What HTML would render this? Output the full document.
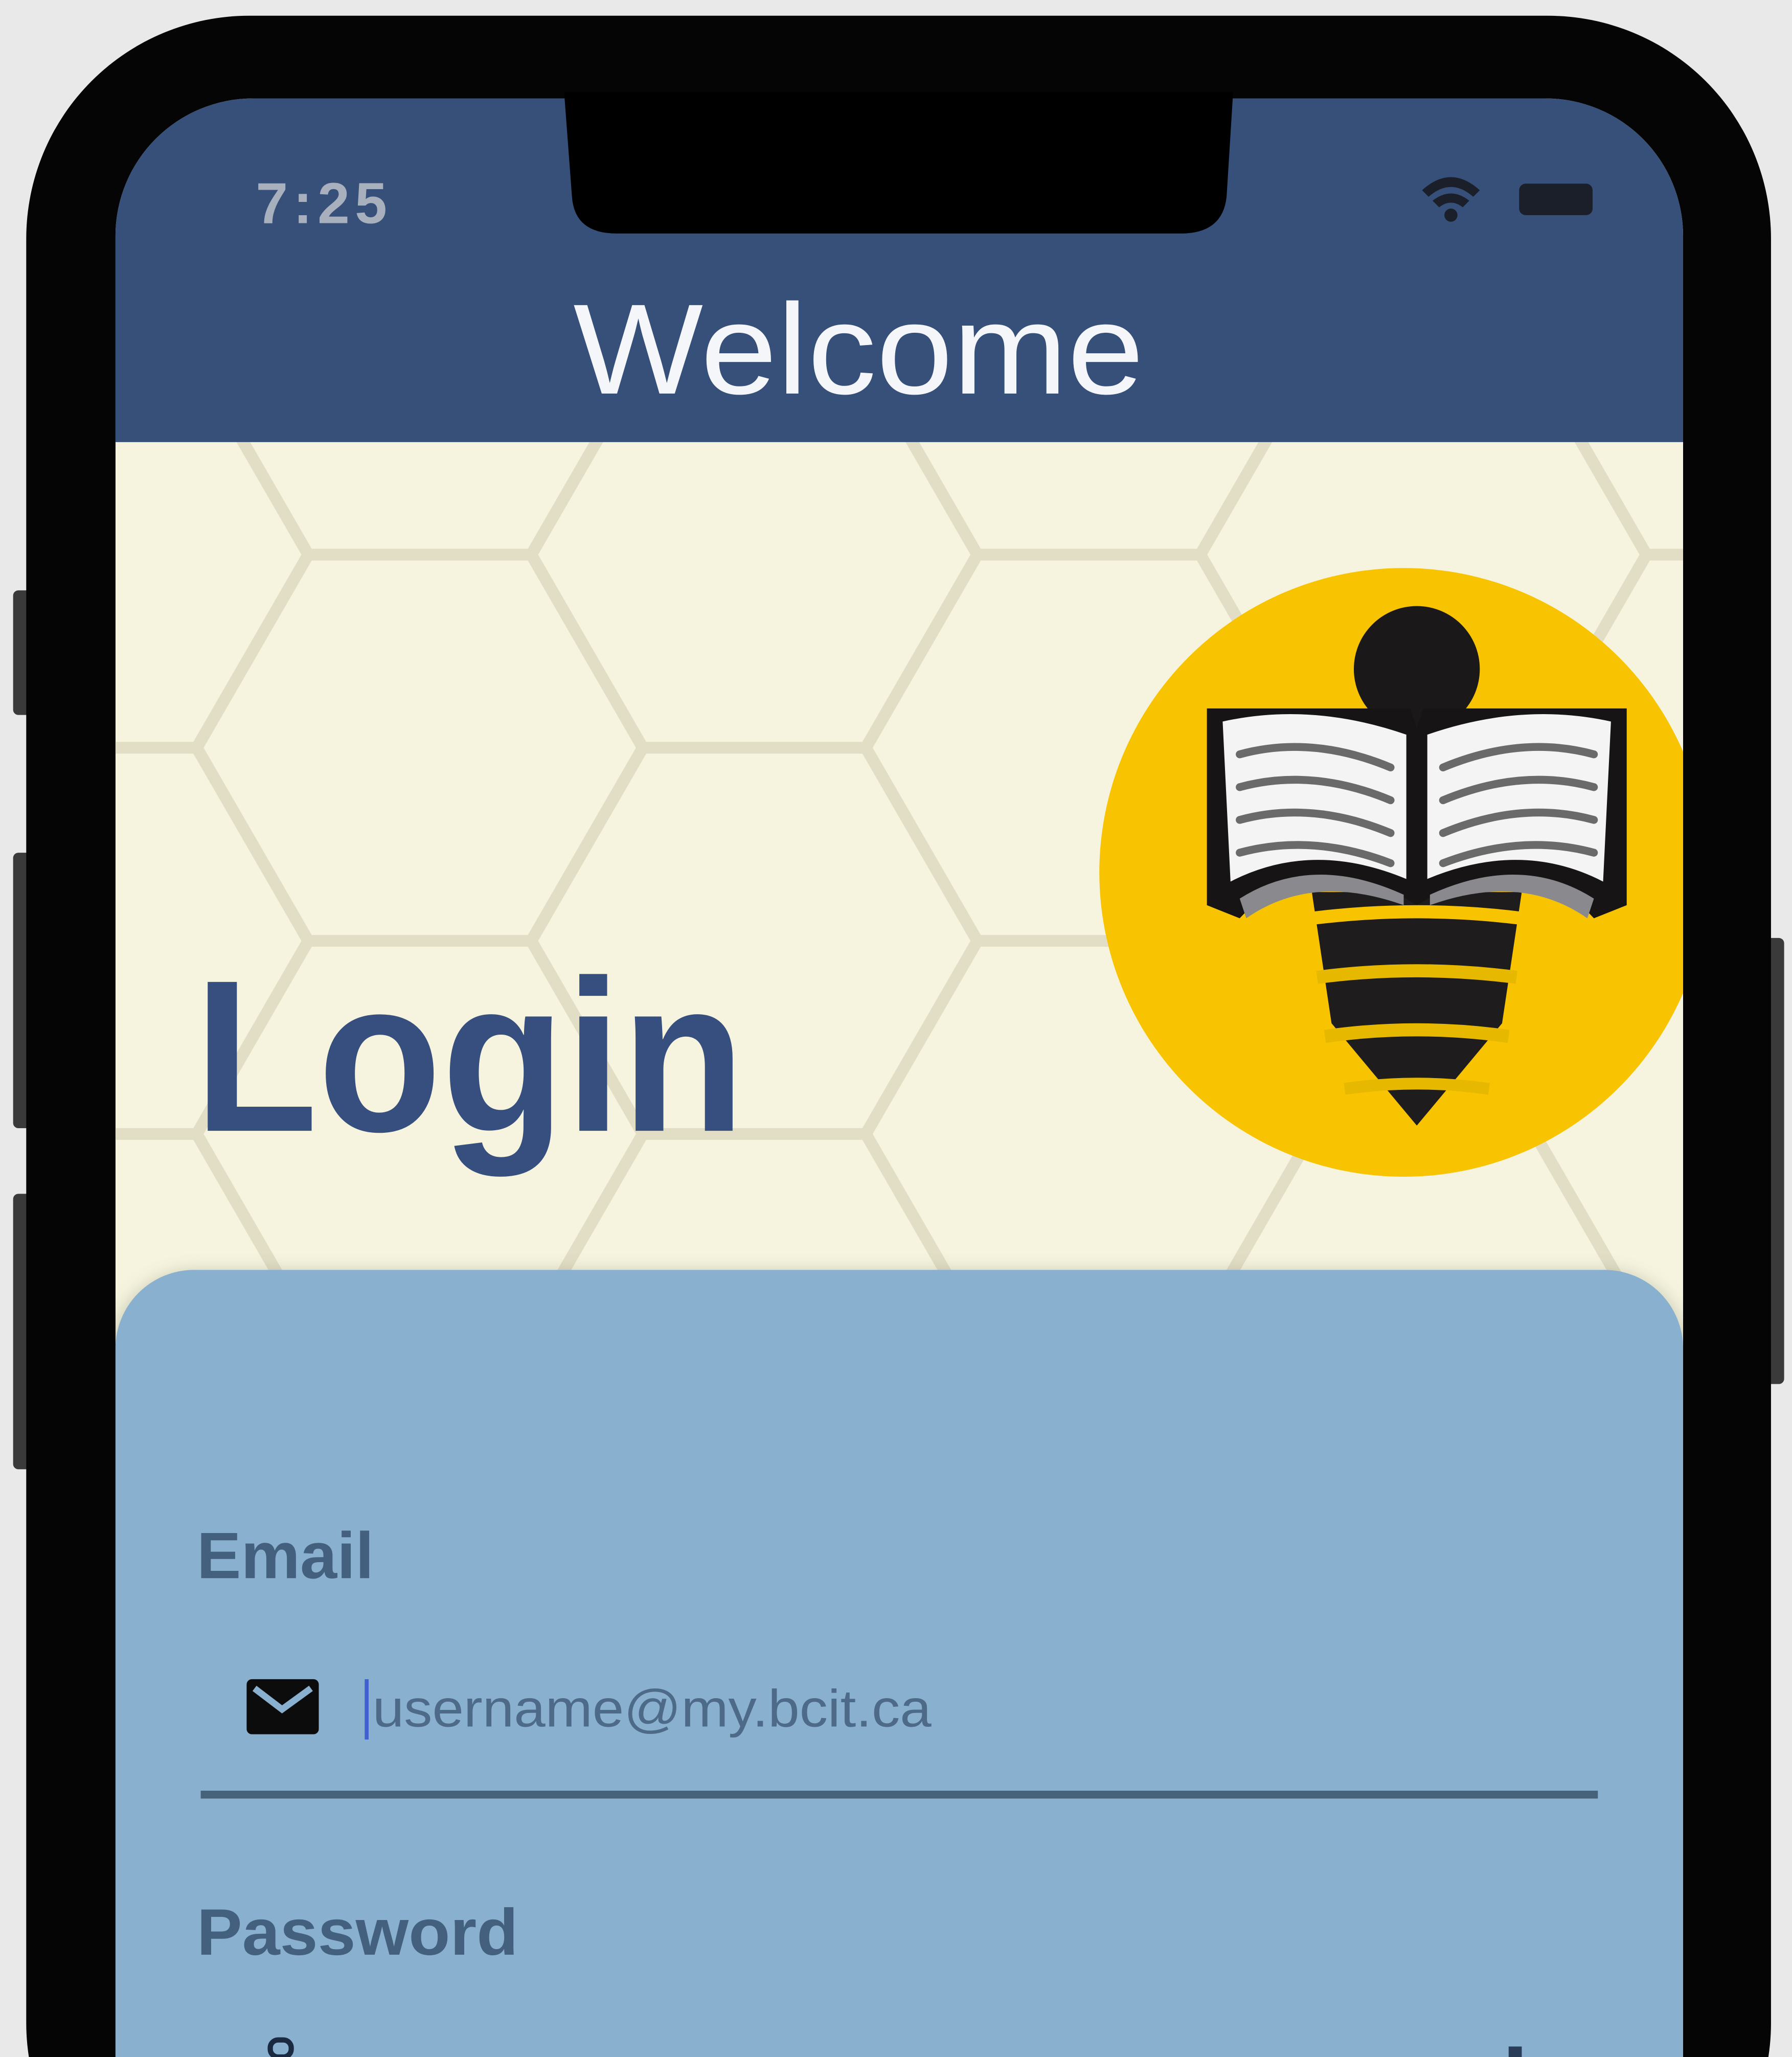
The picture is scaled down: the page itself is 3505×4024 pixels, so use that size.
<!DOCTYPE html>
<html><head><meta charset="utf-8"><style>
html,body{margin:0;padding:0;background:#e9e9e9;width:3505px;height:4024px;overflow:hidden;}
svg{display:block;}
</style></head><body>
<svg width="3505" height="4024" viewBox="0 0 1366 1568" preserveAspectRatio="none" xmlns="http://www.w3.org/2000/svg">
<defs>
<pattern id="hex" patternUnits="userSpaceOnUse" x="320" y="570" width="510" height="294.4">
<g fill="none" stroke="#e2dec6" stroke-width="9" stroke-linejoin="round">
<polygon points="170,0 85,147.2 -85,147.2 -170,0 -85,-147.2 85,-147.2"/>
<polygon points="680,0 595,147.2 425,147.2 340,0 425,-147.2 595,-147.2"/>
<polygon points="170,294.4 85,441.6 -85,441.6 -170,294.4 -85,147.2 85,147.2"/>
<polygon points="680,294.4 595,441.6 425,441.6 340,294.4 425,147.2 595,147.2"/>
<polygon points="425,147.2 340,294.4 170,294.4 85,147.2 170,0 340,0"/>
</g>
</pattern>
<clipPath id="scr"><rect x="88" y="75" width="1195" height="1600" rx="105"/></clipPath>
<filter id="sh" x="-10%" y="-10%" width="120%" height="120%"><feGaussianBlur stdDeviation="8"/></filter>
</defs>
<rect width="1366" height="1568" fill="#e9e9e9"/>
<rect x="10" y="450" width="14" height="95" rx="4" fill="#3a3a3a"/>
<rect x="10" y="650" width="14" height="210" rx="4" fill="#3a3a3a"/>
<rect x="10" y="910" width="14" height="210" rx="4" fill="#3a3a3a"/>
<rect x="1344" y="715" width="16" height="340" rx="4" fill="#3a3a3a"/>
<rect x="20" y="12" width="1330" height="1700" rx="170" fill="#050505"/>
<g clip-path="url(#scr)">
<rect x="88" y="75" width="1195" height="1600" fill="#f6f4de"/>
<rect x="88" y="335" width="1195" height="640" fill="url(#hex)"/>
<rect x="88" y="75" width="1195" height="262" fill="#365079"/>
<circle cx="1070" cy="665" r="232" fill="#f8c300"/>
<circle cx="1080" cy="510" r="48" fill="#1a1818"/>
<path d="M1000 680 L1160 680 L1145 780 L1080 858 L1015 780 Z" fill="#1e1c1c"/>
<path d="M1000 700 Q1080 690 1160 700" stroke="#f8c300" stroke-width="10" fill="none"/>
<path d="M1004 745 Q1080 735 1156 745" stroke="#e6b800" stroke-width="10" fill="none"/>
<path d="M1010 790 Q1080 780 1150 790" stroke="#e6b800" stroke-width="10" fill="none"/>
<path d="M1025 830 Q1080 822 1135 830" stroke="#e6b800" stroke-width="9" fill="none"/>
<path d="M920 540 L1075 540 L1080 555 L1085 540 L1240 540 L1240 690 L1215 700 Q1160 640 1080 690 Q1000 640 945 700 L920 690 Z" fill="#161414"/>
<path d="M932 550 Q1000 535 1072 560 L1072 670 Q1000 640 938 672 Z" fill="#f4f4f4"/>
<path d="M1088 560 Q1160 535 1228 550 L1222 672 Q1160 640 1088 670 Z" fill="#f4f4f4"/>
<path d="M945 685 Q1000 650 1070 682 L1070 690 Q1000 665 950 700 Z" fill="#8a8a8e"/>
<path d="M1090 682 Q1160 650 1215 685 L1210 700 Q1160 665 1090 690 Z" fill="#8a8a8e"/>
<g stroke="#6a6a6a" stroke-width="6" fill="none" stroke-linecap="round">
<path d="M945 575 Q1000 560 1060 585"/><path d="M945 600 Q1000 585 1060 610"/><path d="M945 625 Q1000 610 1060 635"/><path d="M945 650 Q1000 635 1060 658"/>
<path d="M1100 585 Q1160 560 1215 575"/><path d="M1100 610 Q1160 585 1215 600"/><path d="M1100 635 Q1160 610 1215 625"/><path d="M1100 658 Q1160 635 1215 650"/>
</g>
<rect x="88" y="972" width="1195" height="700" rx="60" fill="#3c4a3a" opacity="0.35" filter="url(#sh)"/>
<rect x="88" y="968" width="1195" height="700" rx="60" fill="#8ab0d0"/>
</g>
<path d="M430 70 L940 70 L935 150 Q932 178 900 178 L470 178 Q438 178 436 150 Z" fill="#000"/>
<text x="195" y="170" font-family="Liberation Sans, sans-serif" font-weight="bold" font-size="44" fill="#a8b0be" textLength="100">7:25</text>
<g fill="#1a1f2a">
<path d="M1084 145 Q1106 125 1128 145 L1123 150 Q1106 135 1089 150 Z"/>
<path d="M1092 153 Q1106 142 1120 153 L1115 158 Q1106 151 1097 158 Z"/>
<circle cx="1106" cy="164" r="5"/>
<rect x="1158" y="140" width="56" height="24" rx="5"/>
</g>
<text x="437" y="300" font-family="Liberation Sans, sans-serif" font-size="98" fill="#f4f6fa" textLength="435" lengthAdjust="spacingAndGlyphs">Welcome</text>
<text x="148" y="862" font-family="Liberation Sans, sans-serif" font-weight="bold" font-size="165" fill="#364f7f" textLength="420" lengthAdjust="spacingAndGlyphs">Login</text>
<text x="150" y="1203" font-family="Liberation Sans, sans-serif" font-weight="bold" font-size="50" fill="#44607f" textLength="135" lengthAdjust="spacingAndGlyphs">Email</text>
<rect x="188" y="1280" width="55" height="42" rx="4" fill="#0c0c0c"/>
<path d="M194 1287 L215 1303 L237 1287" stroke="#8ab0d0" stroke-width="5" fill="none"/>
<rect x="278" y="1280" width="3" height="46" fill="#4060d0"/>
<text x="284" y="1316" font-family="Liberation Sans, sans-serif" font-size="40" fill="#4d6a88" textLength="426" lengthAdjust="spacingAndGlyphs">username@my.bcit.ca</text>
<rect x="153" y="1365" width="1065" height="6" fill="#46617a"/>
<text x="150" y="1490" font-family="Liberation Sans, sans-serif" font-weight="bold" font-size="50" fill="#44607f" textLength="245" lengthAdjust="spacingAndGlyphs">Password</text>
<rect x="206" y="1555" width="16" height="13" rx="6" fill="none" stroke="#1a2a40" stroke-width="4"/>
<rect x="1150" y="1560" width="10" height="8" fill="#2a3d58"/>
</svg>
</body></html>
